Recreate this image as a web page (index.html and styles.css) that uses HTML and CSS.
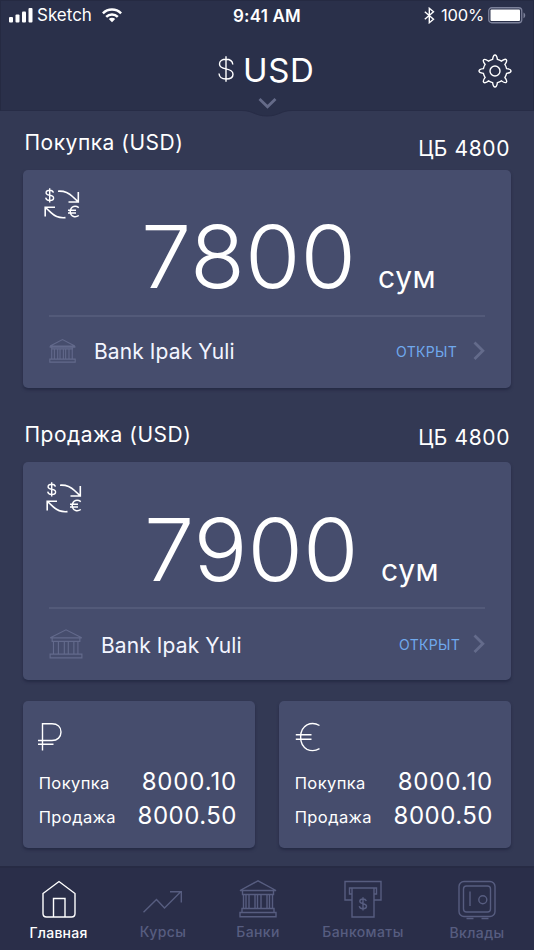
FILE: index.html
```html
<!DOCTYPE html>
<html lang="ru">
<head>
<meta charset="utf-8">
<title>USD</title>
<link rel="stylesheet" href="styles.css">
</head>
<body>
<svg class="defs" aria-hidden="true">
  <symbol id="exchange" viewBox="0 0 36 32">
    <g fill="none" stroke="currentColor" stroke-width="1.6">
      <path d="M9.400 4.600C9 2.900 7.800 2.200 5.700 2.200C3.400 2.200 2.100 3.200 2.100 4.700C2.100 6.300 3.400 6.900 5.700 7.300C8.400 7.700 9.600 8.500 9.600 10C9.600 11.500 8.200 12.500 5.700 12.500C3.500 12.500 2 11.600 1.700 9.700M5.700 .2V14.400" stroke-width="1.400"/>
      <path d="M14 3.200C21 2.700 25 5 28.500 8.500L34 13.600M34.300 4V14H24.500"/>
      <path d="M21.500 29.600C14 30.500 10 27.500 7 24.600L1.500 19.500M1.200 28.500V19.300H11"/>
      <path d="M34.800 19.600C32 17.600 26.800 17.300 26.200 23.500C26.800 29.700 32 29.400 34.800 27.500M24 22.200H32M24 24.900H32" stroke-width="1.500"/>
    </g>
  </symbol>
  <symbol id="bank" viewBox="0 0 38 34">
    <path d="M1.500 10L19 .9L36.500 10ZM1.500 10V11.500H36.500V10M4 14H34M3.700 11.500V28M7.500 14V28M12.200 14V28M15.500 14V28M20.200 14V28M23.500 14V28M28.200 14V28M32.800 11.500V28M1 28.500H37V32.800H1Z" fill="none" stroke="currentColor" stroke-width="1.500"/>
  </symbol>
  <symbol id="bank-large" viewBox="0 0 38 34">
    <path d="M1.200 10L19 .9L36.800 10ZM3.300 10V14H34.700V10M4.800 14V28M10.400 14V28M17.100 14V28M21.600 14V28M27.900 14V28M32.500 14V28M1 28.500H37V32.800H1Z" fill="none" stroke="currentColor" stroke-width="1.300"/>
  </symbol>
  <symbol id="chevron" viewBox="0 0 12 20">
    <path d="M1.500 1.500L9.800 9.800L1.500 18" fill="none" stroke="currentColor" stroke-width="2.800"/>
  </symbol>
</svg>

<div class="screen">
  <header class="header">
    <div class="status">
      <div class="status-left">
        <svg class="signal" viewBox="0 0 24 15" fill="currentColor"><rect x="0" y="9" width="4" height="5.500" rx="1"/><rect x="6.500" y="6.500" width="4" height="8" rx="1"/><rect x="13" y="3.500" width="4" height="11" rx="1"/><rect x="19.500" y="0" width="4" height="14.500" rx="1"/></svg>
        <span class="carrier">Sketch</span>
        <svg class="wifi" viewBox="0 0 20 15" fill="none" stroke="currentColor" stroke-width="2.500"><path d="M.9 5.300A13 13 0 0 1 19.100 5.300M4.200 8.800A8.300 8.300 0 0 1 15.800 8.800"/><path d="M10 14.300L6.800 11.100A4.600 4.600 0 0 1 13.200 11.100Z" fill="currentColor" stroke="none"/></svg>
      </div>
      <span class="time">9:41 AM</span>
      <div class="status-right">
        <svg class="bluetooth" viewBox="0 0 11 17" fill="none" stroke="currentColor" stroke-width="1.400"><path d="M.8 4.700L9.500 12.200L5.300 15.700V1.300L9.500 4.800L.8 12.300"/></svg>
        <span class="percent">100%</span>
        <svg class="battery" viewBox="0 0 38 17"><rect x=".75" y=".75" width="33" height="15" rx="3" fill="none" stroke="#7c819a" stroke-width="1.300"/><rect x="2.500" y="2.500" width="29.500" height="11.500" rx="1" fill="#fff"/><path d="M35.500 5.500C37.800 6.500 37.800 10.300 35.500 11.200Z" fill="#7c819a"/></svg>
      </div>
    </div>
    <div class="title-row">
      <svg class="dollar" viewBox="0 0 16 26" fill="none" stroke="currentColor" stroke-width="1.400"><path d="M14.800 8.500C14.500 5 12 3.200 8 3.200C4 3.200 1.500 5 1.500 8C1.500 11 4 12.200 8 12.900C12.500 13.700 15 15 15 18.200C15 21.200 12.300 23 8 23C3.800 23 1.300 21 1 17.500M8 .3V25.700"/></svg>
      <h1 class="title">USD</h1>
      <svg class="gear" viewBox="0 0 34 34" fill="none" stroke="currentColor" stroke-width="1.400"><circle cx="17" cy="17" r="5"/><path d="M14.600 5.400C15 2.700 15.200 1 17 1S19 2.700 19.400 5.400Q21.600 5.900 23.500 7.100C25.700 5.500 27.100 4.400 28.300 5.700S28.500 8.300 26.900 10.500Q28.100 12.400 28.600 14.600C31.300 15 33 15.200 33 17S31.300 19 28.600 19.400Q28.100 21.600 26.900 23.500C28.500 25.700 29.600 27.100 28.300 28.300S25.700 28.500 23.500 26.900Q21.600 28.100 19.400 28.600C19 31.300 18.800 33 17 33S15 31.300 14.600 28.600Q12.400 28.100 10.500 26.900C8.300 28.500 6.900 29.600 5.700 28.300S5.500 25.700 7.100 23.500Q5.900 21.600 5.400 19.400C2.700 19 1 18.800 1 17S2.700 15 5.400 14.600Q5.900 12.400 7.100 10.500C5.500 8.300 4.400 6.900 5.700 5.700S8.300 5.500 10.500 7.100Q12.400 5.900 14.600 5.400Z"/></svg>
    </div>
    <svg class="notch" viewBox="0 0 60 24"><path d="M5 13.500C16 13.500 18 19 30 19S44 13.500 55 13.500V12.500H5Z" fill="#2a304a"/><path d="M5 13.500C16 13.500 18 19 30 19S44 13.500 55 13.500" fill="none" stroke="#272c46"/><path d="M22.500 2L30.500 9.800L38.500 2" fill="none" stroke="#656b89" stroke-width="2.800"/></svg>
  </header>

  <main class="content">
    <section class="rate">
      <div class="rate-head"><h2 class="label">Покупка (USD)</h2><span class="cb">ЦБ 4800</span></div>
      <div class="card">
        <svg class="exchange"><use href="#exchange"/></svg>
        <div class="amount"><span class="value">7800</span><span class="unit">сум</span></div>
        <div class="bank-row">
          <svg class="bank-icon"><use href="#bank"/></svg>
          <span class="bank-name">Bank Ipak Yuli</span>
          <span class="open">ОТКРЫТ</span>
          <svg class="chevron"><use href="#chevron"/></svg>
        </div>
      </div>
    </section>
    <section class="rate sell">
      <div class="rate-head"><h2 class="label">Продажа (USD)</h2><span class="cb">ЦБ 4800</span></div>
      <div class="card">
        <svg class="exchange"><use href="#exchange"/></svg>
        <div class="amount"><span class="value">7900</span><span class="unit">сум</span></div>
        <div class="bank-row">
          <svg class="bank-icon"><use href="#bank-large"/></svg>
          <span class="bank-name">Bank Ipak Yuli</span>
          <span class="open">ОТКРЫТ</span>
          <svg class="chevron"><use href="#chevron"/></svg>
        </div>
      </div>
    </section>
    <div class="minis">
      <section class="mini">
        <svg class="currency" viewBox="0 0 26 30" fill="none" stroke="currentColor" stroke-width="1.400"><path d="M4.500 28.500V1.700H14C19.500 1.700 23 5 23 10S19.500 18.500 14 18.500H0M0 22.300H15.500"/></svg>
        <div class="pair"><span class="pair-label">Покупка</span><span class="pair-value wide">8000.10</span></div>
        <div class="pair"><span class="pair-label">Продажа</span><span class="pair-value">8000.50</span></div>
      </section>
      <section class="mini">
        <svg class="currency euro" viewBox="0 0 26 30" fill="none" stroke="currentColor" stroke-width="1.400"><path d="M24.500 3.500C21 1.500 16 1 12 2.900C3.500 7.500 3.500 22.700 12 27.300C16 29.200 21 28.700 24.500 26.700M.8 12.800H16.500M.8 17.200H16.500"/></svg>
        <div class="pair"><span class="pair-label">Покупка</span><span class="pair-value wide">8000.10</span></div>
        <div class="pair"><span class="pair-label">Продажа</span><span class="pair-value">8000.50</span></div>
      </section>
    </div>
  </main>

  <nav class="tabs">
    <a class="tab active"><svg viewBox="0 0 40 40"><path d="M4 13.500L20 1.500L36 13.500V33.500Q36 37 32.500 37H7.500Q4 37 4 33.500ZM14.500 37V18.500H26V37"/></svg><span>Главная</span></a>
    <a class="tab rates"><svg viewBox="0 0 40 40"><path d="M.5 32.300L13.500 19.500L21.500 28L38 11.500M27 11.800H38.300V22.500"/></svg><span>Курсы</span></a>
    <a class="tab banks"><svg viewBox="0 0 40 40"><path d="M2 10.500L20 .8L38 10.500ZM4.500 10.500V14.500H35.500V10.500M5.500 14.500V28.500M8 14.500V28.500M11 14.500V28.500M17 14.500V28.500M19.500 14.500V28.500M23 14.500V28.500M29 14.500V28.500M31.500 14.500V28.500M34.500 14.500V28.500M4 32.500V28.500H36V32.500M2 32.500H38V36.800H2Z"/></svg><span>Банки</span></a>
    <a class="tab atm"><svg viewBox="0 0 40 40"><path d="M9 20H2V1.500H38V20H31M9 14H6.500V8H33.500V14H31M9 8V37H31V8M23.300 21C22.800 19.500 21.700 19 20 19C18 19 16.800 20 16.800 21.300C16.800 22.800 18 23.300 20 23.700C22.300 24.100 23.500 24.800 23.500 26.300C23.500 27.800 22 28.800 20 28.800C18 28.800 16.600 27.800 16.300 26.200M20 17.300V30.500"/></svg><span>Банкоматы</span></a>
    <a class="tab deposits"><svg viewBox="0 0 40 40"><rect x="2" y="1.500" width="36" height="35" rx="5"/><rect x="6.500" y="6" width="27" height="26" rx="3"/><circle cx="25.800" cy="19.700" r="4"/><path d="M13 11.500V26M9.500 38.500H16.500M24.500 38.500H31.500"/></svg><span>Вклады</span></a>
  </nav>
</div>
</body>
</html>
```
FILE: styles.css
```css
* { box-sizing: border-box; margin: 0; padding: 0; }
body { background: #333954; color: #fff; font-family: Inter, sans-serif; }
svg { display: block; flex: none; }
.defs { position: absolute; width: 0; height: 0; }
.screen { width: 534px; height: 950px; display: flex; flex-direction: column; overflow: hidden; }

.header { position: relative; height: 111px; background: #2a304a; border: 1px solid #252a42; border-bottom-color: #272c46; }
.status { display: grid; grid-template-columns: 232px 1fr 110px; height: 29px; align-items: center; }
.status-left, .status-right { display: flex; align-items: center; }
.signal { width: 24px; height: 15px; margin-left: 8px; }
.carrier { width: 55px; margin-left: 4px; font-size: 17px; line-height: 20px; margin-top: -1px; }
.wifi { width: 20px; height: 15px; margin-left: 10px; margin-top: -1px; }
.time { font-size: 17px; font-weight: 600; letter-spacing: .2px; line-height: 20px; }
.bluetooth { width: 11px; height: 17px; margin-left: 1px; margin-top: -1px; }
.percent { width: 43px; margin-left: 6px; margin-top: -1px; font-size: 16.5px; letter-spacing: -.2px; line-height: 20px; }
.battery { width: 38px; height: 17px; margin-left: 4px; }
.title-row { display: flex; align-items: center; height: 80px; padding-left: 217px; }
.dollar { width: 16px; height: 26px; margin-top: -2px; }
.title { width: 72px; margin-left: 9px; margin-top: -1px; font-size: 33px; font-weight: 400; line-height: 40px; letter-spacing: .6px; }
.gear { width: 34px; height: 34px; margin-left: 163px; margin-top: 2px; }
.notch { position: absolute; left: 236px; top: 96px; width: 60px; height: 24px; }

.content { flex: 1; padding: 0 23px; }
.rate-head { display: flex; justify-content: space-between; height: 59px; padding: 17px 0 0 1.5px; }
.label, .cb { font-size: 21px; font-weight: 400; line-height: 30px; letter-spacing: .5px; }
.cb { letter-spacing: .6px; margin-top: 6px; padding-right: 1px; }
.card { position: relative; display: flex; flex-direction: column; height: 218px; padding: 0 26px; border-radius: 5px; background: #464d6d; box-shadow: 0 2px 3px #252a45; }
.exchange { position: absolute; left: 21px; top: 18px; width: 36px; height: 32px; }
.amount { display: flex; align-items: baseline; height: 147px; padding-left: 92px; border-bottom: 2px solid #535a79; }
.value { width: 236px; font-size: 86px; font-weight: 300; line-height: 174px; transform: scaleX(1.045); transform-origin: left; }
.unit { font-size: 30px; letter-spacing: .6px; margin-left: 1px; }
.bank-row { display: flex; align-items: center; height: 69px; }
.bank-icon { width: 27px; height: 24px; margin-top: -2px; color: #636a8c; }
.bank-name { width: 150px; margin-left: 18px; font-size: 21px; line-height: 26px; letter-spacing: .1px; color: #f3f5ff; }
.open { width: 77px; margin-left: 152px; padding-top: 1px; font-size: 14px; line-height: 20px; letter-spacing: .35px; color: #70a9ed; }
.chevron { width: 12px; height: 20px; margin-top: -1px; color: #646b8b; }
.sell .rate-head { height: 74px; padding-top: 32px; }
.sell .cb { margin-top: 3px; }
.sell .exchange { left: 23px; top: 20px; }
.sell .amount { padding-left: 95px; }
.sell .value { line-height: 177px; }
.sell .bank-row { height: 71px; }
.sell .bank-icon { width: 34px; height: 30px; margin-top: -2px; }
.sell .bank-name { margin-left: 18px; padding-top: 3px; }
.sell .open { width: 74px; margin-left: 148px; padding-top: 0; }
.sell .chevron { margin-top: -2px; }

.minis { display: grid; grid-template-columns: 1fr 1fr; gap: 24px; margin-top: 21px; }
.mini { height: 147px; padding: 21px 17px 0 15px; border-radius: 5px; background: #464d6d; box-shadow: 0 2px 3px #252a45; }
.currency { width: 26px; height: 30px; margin-bottom: 13px; }
.euro { margin-left: 1px; }
.pair { display: flex; justify-content: space-between; align-items: center; height: 34px; }
.pair-label { padding-top: 1px; font-size: 16.5px; line-height: 22px; letter-spacing: .4px; margin-left: .7px; }
.pair-value { font-size: 24px; line-height: 30px; letter-spacing: .5px; margin-right: 1px; }
.wide { letter-spacing: .85px; }

.tabs { display: grid; grid-template-columns: 116px 92px 98px 112px 116px; height: 84px; padding-left: 1px; background: #2a2e49; border-top: 2px solid #272b44; }
.tab { display: flex; flex-direction: column; align-items: center; padding-top: 12px; font-size: 14px; font-weight: 500; line-height: 20px; letter-spacing: .4px; color: #575d80; }
.tab svg { width: 40px; height: 40px; margin-bottom: 2px; fill: none; stroke: currentColor; stroke-width: 1.4; }
.active { color: #fff; letter-spacing: .25px; }
.active span { margin-right: 1px; }
.active svg, .deposits svg { margin-bottom: 3px; }
```
